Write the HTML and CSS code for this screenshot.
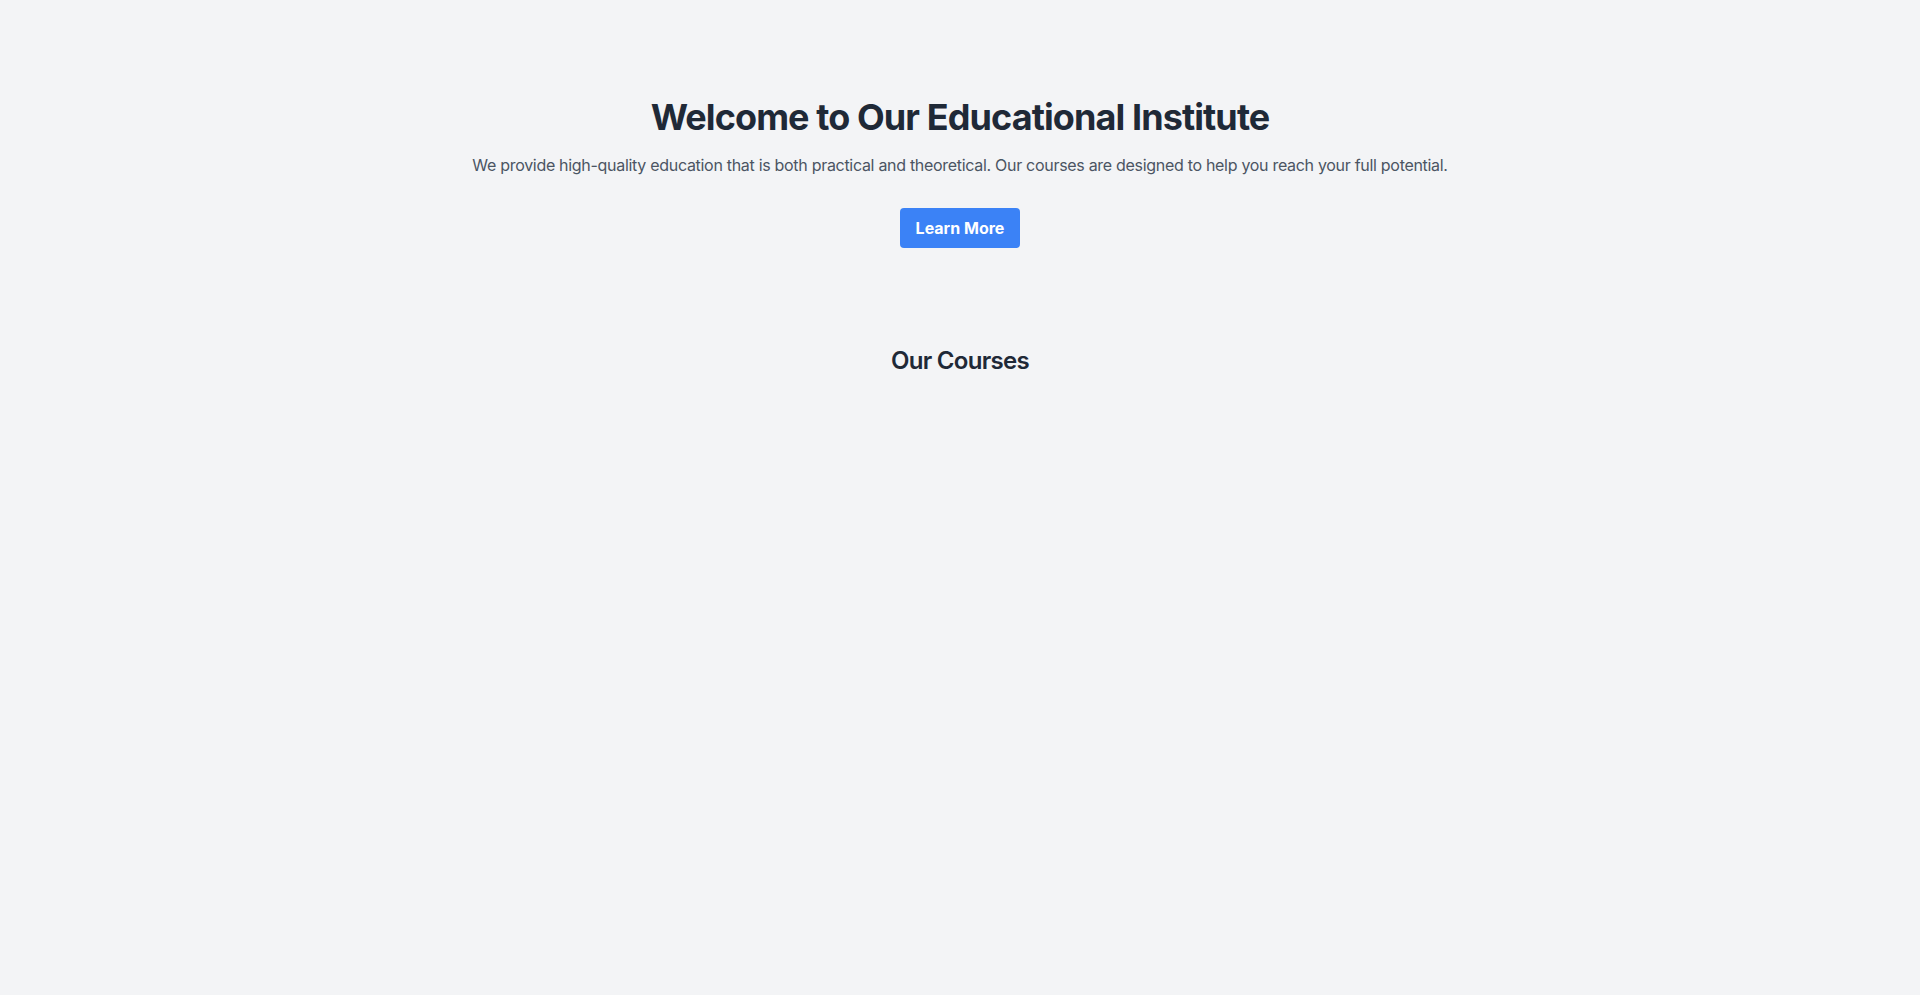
FILE: index.html
```html
<!DOCTYPE html>
<html lang="en">
<head>
<meta charset="utf-8">
<title>Educational Institute</title>
<link rel="stylesheet" href="styles.css">
</head>
<body>
<main class="page">
  <section class="hero">
    <h1 class="hero-title">Welcome to Our Educational Institute</h1>
    <p class="hero-text">We provide high-quality education that is both practical and theoretical. Our courses are designed to help you reach your full potential.</p>
    <a class="btn" href="#">Learn More</a>
  </section>
  <section class="courses">
    <h2 class="courses-title">Our Courses</h2>
  </section>
</main>
</body>
</html>
```

FILE: styles.css
```css
html, body {
  margin: 0;
  padding: 0;
}
body {
  background: #f3f4f6;
  font-family: Inter, "Noto Sans", sans-serif;
  color: #1f2937;
  min-height: 995px;
}
.page {
  display: flex;
  flex-direction: column;
  align-items: center;
}
.hero {
  padding-top: 97px;
  display: flex;
  flex-direction: column;
  align-items: center;
  text-align: center;
}
.hero-title {
  margin: 0;
  font-size: 36px;
  line-height: 40px;
  font-weight: 700;
  letter-spacing: -0.9px;
  color: #1f2937;
}
.hero-text {
  margin: 16px 0 0;
  font-size: 16px;
  line-height: 24px;
  letter-spacing: -0.3px;
  color: #4b5563;
}
.btn {
  margin-top: 31px;
  display: inline-block;
  background: #3b82f6;
  color: #fff;
  font-weight: 700;
  font-size: 16px;
  line-height: 24px;
  padding: 8px 16px;
  border-radius: 4px;
  text-decoration: none;
}
.courses {
  margin-top: 97px;
  text-align: center;
}
.courses-title {
  margin: 0;
  font-size: 24px;
  line-height: 32px;
  font-weight: 600;
  letter-spacing: -0.7px;
  color: #1f2937;
}
```
